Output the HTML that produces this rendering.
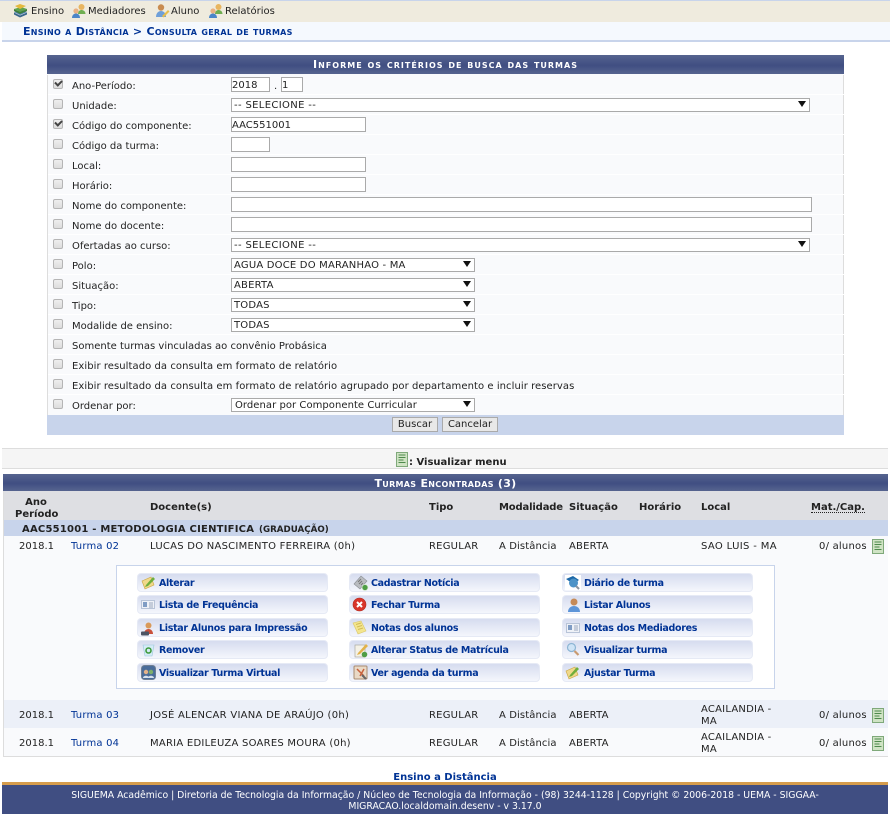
<!DOCTYPE html>
<html lang="pt"><head><meta charset="utf-8"><title>Consulta geral de turmas</title>
<style>
html,body{margin:0;padding:0;background:#fff;width:890px;height:814px;overflow:hidden}
body{position:relative;font:10px/12px "DejaVu Sans",Verdana,sans-serif;color:#222}
.a,.t,.b,.i,.s,.c,svg{position:absolute}
.t{white-space:nowrap;height:12px;line-height:12px;margin-top:1px}
.h{font-weight:bold;color:#222}
.d{letter-spacing:.22px}
.i,.s{box-sizing:border-box;background:#fff;border:1px solid #aaa;height:15px;left:231px;padding:1px 0 0 0;line-height:13px;white-space:nowrap;font-size:10px;color:#222}
.s{height:14px;line-height:12px;padding:1px 1px 0 1px;letter-spacing:.2px}
.s:after{content:"";position:absolute;right:3px;top:2px;border:4px solid transparent;border-top:6px solid #111;border-bottom:0}
.c{left:53px;width:10px;height:10px;box-sizing:border-box;border:1px solid #b5b5b5;border-radius:2px;background:linear-gradient(#eee,#ddd)}
.c.k:after{content:"";position:absolute;left:1px;top:0;width:5px;height:3px;border-left:2px solid #444;border-bottom:2px solid #444;transform:rotate(-45deg)}
.r{position:absolute;left:48px;width:795px;height:19px;background:#f9fafc;border-right:1px solid #ddd}
.b{width:191px;height:19px;box-sizing:border-box;border:1px solid #e6eaf5;border-radius:4px;background:linear-gradient(#d6dcef,#f4f6fc)}
.l{color:#003395;font-weight:bold;font-size:9.5px;letter-spacing:-.3px}
.tu{color:#003395;letter-spacing:.2px}
.btn{position:absolute;box-sizing:border-box;height:15px;background:#e8e8e8;border:1px solid #aaa;text-align:center;line-height:14px;color:#222}
.f{font-size:9.3px;color:#fff;text-align:center;left:2px;width:886px}
</style></head><body>

<div class="a" style="left:0;top:0;width:890px;height:22px;background:#efebde;border-top:1px solid #c8d4eb;box-sizing:border-box"></div>
<svg style="left:13px;top:3px" width="15" height="16" viewBox="0 0 15 16"><path d="M1 9l7-2 6 2-7 3z" fill="#4b7fb5"/><path d="M1 11.500l6 3 7-3v-2l-7 3-6-3z" fill="#38658c"/><path d="M1 6l7-2 6 2-7 3z" fill="#5fa34c"/><path d="M1 8l6 3 7-3v-2l-7 3-6-3z" fill="#3e7f3a"/><path d="M2 3l5-2 6 2-6 3z" fill="#e3b93e"/></svg>
<div class="t" style="left:31px;top:5px">Ensino</div>
<svg style="left:71px;top:3px" width="16" height="16" viewBox="0 0 16 16"><circle cx="10.500" cy="4" r="3" fill="#e8b560"/><path d="M7 11c0-3 2-4 3.500-4s4 1 4 4z" fill="#6fae50"/><circle cx="5" cy="8" r="2.600" fill="#e9b183"/><path d="M1 15c0-3 2-4.500 4-4.500s4 1.500 4 4.500z" fill="#4b86c9"/></svg>
<div class="t" style="left:88px;top:5px">Mediadores</div>
<svg style="left:154px;top:3px" width="16" height="16" viewBox="0 0 16 16"><circle cx="7" cy="4.500" r="3.200" fill="#c98c50"/><path d="M2 14c0-4 2.500-6 5-6s5 2 5 6z" fill="#6f9fd8"/><path d="M8 13l6-6 1.500 1.500-6 6z" fill="#e8bd4a"/></svg>
<div class="t" style="left:171px;top:5px">Aluno</div>
<svg style="left:208px;top:3px" width="16" height="16" viewBox="0 0 16 16"><circle cx="10.500" cy="4" r="3" fill="#e8b560"/><path d="M7 11c0-3 2-4 3.500-4s4 1 4 4z" fill="#6fae50"/><circle cx="5" cy="8" r="2.600" fill="#e9b183"/><path d="M1 15c0-3 2-4.500 4-4.500s4 1.500 4 4.500z" fill="#4b86c9"/></svg>
<div class="t" style="left:225px;top:5px">Relatórios</div>

<div class="a" style="left:2px;top:22px;width:888px;height:20px;box-sizing:border-box;background:#f5f9fe;border-bottom:2px solid #c8d4eb"></div>
<div class="t" style="left:23px;top:25px;font-weight:bold;font-variant:small-caps;color:#003395;font-size:11px;letter-spacing:.27px">Ensino a Distância &gt; Consulta geral de turmas</div>

<div class="a" style="left:47px;top:55px;width:797px;height:19px;background:linear-gradient(#56648f,#404e82 55%,#56648f)"></div>
<div class="t" style="left:47px;top:58px;width:797px;text-align:center;color:#fff;font-weight:bold;font-variant:small-caps;font-size:11px;letter-spacing:1px">Informe os critérios de busca das turmas</div>
<div class="a" style="left:47px;top:74px;width:1px;height:360px;background:#ddd"></div>
<div class="r" style="top:75px"></div><div class="r" style="top:95px"></div><div class="r" style="top:115px"></div><div class="r" style="top:135px"></div><div class="r" style="top:155px"></div><div class="r" style="top:175px"></div><div class="r" style="top:195px"></div><div class="r" style="top:215px"></div><div class="r" style="top:235px"></div><div class="r" style="top:255px"></div><div class="r" style="top:275px"></div><div class="r" style="top:295px"></div><div class="r" style="top:315px"></div><div class="r" style="top:335px"></div><div class="r" style="top:355px"></div><div class="r" style="top:375px"></div><div class="r" style="top:395px;height:20px"></div>
<div class="a" style="left:47px;top:74px;width:797px;height:1px;background:#f9fafc"></div>
<div class="a" style="left:47px;top:415px;width:797px;height:20px;background:#c8d4eb"></div>

<div class="c k" style="top:79px"></div><div class="t" style="left:72px;top:80px">Ano-Período:</div>
<div class="c" style="top:99px"></div><div class="t" style="left:72px;top:100px">Unidade:</div>
<div class="c k" style="top:119px"></div><div class="t" style="left:72px;top:120px">Código do componente:</div>
<div class="c" style="top:139px"></div><div class="t" style="left:72px;top:140px">Código da turma:</div>
<div class="c" style="top:159px"></div><div class="t" style="left:72px;top:160px">Local:</div>
<div class="c" style="top:179px"></div><div class="t" style="left:72px;top:180px">Horário:</div>
<div class="c" style="top:199px"></div><div class="t" style="left:72px;top:200px">Nome do componente:</div>
<div class="c" style="top:219px"></div><div class="t" style="left:72px;top:220px">Nome do docente:</div>
<div class="c" style="top:239px"></div><div class="t" style="left:72px;top:240px">Ofertadas ao curso:</div>
<div class="c" style="top:259px"></div><div class="t" style="left:72px;top:260px">Polo:</div>
<div class="c" style="top:279px"></div><div class="t" style="left:72px;top:280px">Situação:</div>
<div class="c" style="top:299px"></div><div class="t" style="left:72px;top:300px">Tipo:</div>
<div class="c" style="top:319px"></div><div class="t" style="left:72px;top:320px">Modalide de ensino:</div>
<div class="c" style="top:339px"></div><div class="t" style="left:72px;top:340px">Somente turmas vinculadas ao convênio Probásica</div>
<div class="c" style="top:359px"></div><div class="t" style="left:72px;top:360px;letter-spacing:.06px">Exibir resultado da consulta em formato de relatório</div>
<div class="c" style="top:379px"></div><div class="t" style="left:72px;top:380px;letter-spacing:.06px">Exibir resultado da consulta em formato de relatório agrupado por departamento e incluir reservas</div>
<div class="c" style="top:399px"></div><div class="t" style="left:72px;top:400px">Ordenar por:</div>

<div class="i" style="top:77px;width:39px">2018</div>
<div class="t" style="left:274px;top:80px">.</div>
<div class="i" style="top:77px;left:281px;width:22px">1</div>
<div class="s" style="top:98px;width:579px;letter-spacing:.35px;padding-left:2px">-- SELECIONE --</div>
<div class="i" style="top:117px;width:135px">AAC551001</div>
<div class="i" style="top:137px;width:39px"></div>
<div class="i" style="top:157px;width:135px"></div>
<div class="i" style="top:177px;width:135px"></div>
<div class="i" style="top:197px;width:581px"></div>
<div class="i" style="top:217px;width:581px"></div>
<div class="s" style="top:238px;width:579px;letter-spacing:.35px;padding-left:2px">-- SELECIONE --</div>
<div class="s" style="top:258px;width:244px;padding-left:2px">AGUA DOCE DO MARANHAO - MA</div>
<div class="s" style="top:278px;width:244px;padding-left:2px">ABERTA</div>
<div class="s" style="top:298px;width:244px;padding-left:2px">TODAS</div>
<div class="s" style="top:318px;width:244px;padding-left:2px">TODAS</div>
<div class="s" style="top:398px;width:244px;padding-left:3px;letter-spacing:.05px">Ordenar por Componente Curricular</div>

<div class="btn" style="left:392px;top:417px;width:46px">Buscar</div>
<div class="btn" style="left:442px;top:417px;width:56px">Cancelar</div>

<div class="a" style="left:2px;top:448px;width:886px;height:21px;box-sizing:border-box;background:#f5f5f5;border-top:1px solid #ddd;border-bottom:1px solid #ddd"></div>
<svg style="left:396px;top:452px" width="12" height="15" viewBox="0 0 12 15"><rect x=".5" y=".5" width="11" height="14" fill="#cfe3c4" stroke="#7fa97a"/><path d="M2.500 3h7M2.500 5.500h7M2.500 8h5M2.500 10.500h7" stroke="#4e8a4c"/></svg>
<div class="t h" style="left:409px;top:456px">: Visualizar menu</div>

<div class="a" style="left:3px;top:474px;width:885px;height:17px;background:linear-gradient(#56648f,#404e82 55%,#56648f)"></div>
<div class="t" style="left:3px;top:477px;width:885px;text-align:center;color:#fff;font-weight:bold;font-variant:small-caps;font-size:11px;letter-spacing:.3px">Turmas Encontradas (3)</div>
<div class="a" style="left:3px;top:491px;width:885px;height:29px;background:#dedfe3"></div>
<div class="t h" style="left:25px;top:496px;width:22px;text-align:center">Ano</div>
<div class="t h" style="left:15px;top:508px">Período</div>
<div class="t h" style="left:150px;top:501px">Docente(s)</div>
<div class="t h" style="left:429px;top:501px">Tipo</div>
<div class="t h" style="left:499px;top:501px;letter-spacing:-.15px">Modalidade</div>
<div class="t h" style="left:569px;top:501px">Situação</div>
<div class="t h" style="left:639px;top:501px">Horário</div>
<div class="t h" style="left:701px;top:501px">Local</div>
<div class="t h" style="left:811px;top:501px;border-bottom:1px dotted #222;height:10px">Mat./Cap.</div>
<div class="a" style="left:3px;top:520px;width:885px;height:16px;background:#c8d4eb"></div>
<div class="t h" style="left:22px;top:523px;letter-spacing:.22px">AAC551001 - METODOLOGIA CIENTIFICA</div>
<div class="t h" style="left:259px;top:523px;font-size:8.7px">(GRADUAÇÃO)</div>

<div class="a" style="left:3px;top:536px;width:885px;height:220px;background:#f9fafc"></div>
<div class="a" style="left:3px;top:700px;width:885px;height:28px;background:#ecf0f8"></div>
<div class="a" style="left:3px;top:491px;width:1px;height:266px;background:#ddd"></div>
<div class="a" style="left:3px;top:756px;width:885px;height:1px;background:#ddd"></div>

<div class="t" style="left:19px;top:540px">2018.1</div><div class="t tu" style="left:71px;top:540px">Turma 02</div><div class="t d" style="left:150px;top:540px;letter-spacing:.25px">LUCAS DO NASCIMENTO FERREIRA (0h)</div><div class="t d" style="left:429px;top:540px">REGULAR</div><div class="t" style="left:499px;top:540px;letter-spacing:.1px">A Distância</div><div class="t d" style="left:569px;top:540px">ABERTA</div><div class="t" style="left:701px;top:540px;letter-spacing:.35px">SAO LUIS - MA</div><div class="t d" style="left:819px;top:540px">0/ alunos</div>
<svg style="left:872px;top:539px" width="12" height="15" viewBox="0 0 12 15"><rect x=".5" y=".5" width="11" height="14" fill="#cfe3c4" stroke="#7fa97a"/><path d="M2.500 3h7M2.500 5.500h7M2.500 8h5M2.500 10.500h7" stroke="#4e8a4c"/></svg>

<div class="a" style="left:116px;top:565px;width:659px;height:124px;box-sizing:border-box;background:#fff;border:1px solid #c8d4eb"></div>

<div class="b" style="left:137px;top:573px"></div><div class="b" style="left:349px;top:573px"></div><div class="b" style="left:562px;top:573px"></div>
<div class="b" style="left:137px;top:595px"></div><div class="b" style="left:349px;top:595px"></div><div class="b" style="left:562px;top:595px"></div>
<div class="b" style="left:137px;top:618px"></div><div class="b" style="left:349px;top:618px"></div><div class="b" style="left:562px;top:618px"></div>
<div class="b" style="left:137px;top:640px"></div><div class="b" style="left:349px;top:640px"></div><div class="b" style="left:562px;top:640px"></div>
<div class="b" style="left:137px;top:663px"></div><div class="b" style="left:349px;top:663px"></div><div class="b" style="left:562px;top:663px"></div>

<div class="t l" style="left:159px;top:577px">Alterar</div><div class="t l" style="left:371px;top:577px">Cadastrar Notícia</div><div class="t l" style="left:584px;top:577px">Diário de turma</div>
<div class="t l" style="left:159px;top:599px">Lista de Frequência</div><div class="t l" style="left:371px;top:599px">Fechar Turma</div><div class="t l" style="left:584px;top:599px">Listar Alunos</div>
<div class="t l" style="left:159px;top:622px">Listar Alunos para Impressão</div><div class="t l" style="left:371px;top:622px">Notas dos alunos</div><div class="t l" style="left:584px;top:622px">Notas dos Mediadores</div>
<div class="t l" style="left:159px;top:644px">Remover</div><div class="t l" style="left:371px;top:644px">Alterar Status de Matrícula</div><div class="t l" style="left:584px;top:644px">Visualizar turma</div>
<div class="t l" style="left:159px;top:667px">Visualizar Turma Virtual</div><div class="t l" style="left:371px;top:667px">Ver agenda da turma</div><div class="t l" style="left:584px;top:667px">Ajustar Turma</div>

<svg style="left:141px;top:575px" width="15" height="15" viewBox="0 0 15 15"><path d="M1 6l9-4 3 8-9 4z" fill="#f0d98a" stroke="#c9a33f" stroke-width=".6"/><path d="M5 10l7-8 2 2-7 7-3 1z" fill="#6fae3c"/></svg>
<svg style="left:141px;top:599px" width="15" height="11" viewBox="0 0 15 11"><rect x=".5" y="1.500" width="13" height="8" fill="#eef1f7" stroke="#b8c4d8"/><rect x="2" y="3" width="4" height="5" fill="#7f9cc4"/><path d="M8 4h4M8 6h4M8 8h4" stroke="#9aa8be"/></svg>
<svg style="left:140px;top:621px" width="16" height="16" viewBox="0 0 16 16"><circle cx="8.500" cy="4.500" r="3" fill="#d99a5a"/><path d="M4 13c0-3 2-5 4.500-5s4.500 2 4.500 5z" fill="#c9503a"/><rect x="1" y="10.500" width="8" height="4" rx="1" fill="#4d5564"/></svg>
<svg style="left:142px;top:643px" width="13" height="14" viewBox="0 0 13 14"><path d="M1 2h11l-2 11H3z" fill="#d4ecf6" stroke="#9cc6dc" stroke-width=".6"/><circle cx="6.500" cy="7.500" r="2.500" fill="none" stroke="#3f9a3c" stroke-width="1.600"/></svg>
<svg style="left:141px;top:665px" width="15" height="15" viewBox="0 0 15 15"><rect x=".5" y=".5" width="14" height="14" rx="3" fill="#4a6d9a" stroke="#6f7f93"/><circle cx="5" cy="7" r="2.200" fill="#e3b38a"/><circle cx="10" cy="7" r="2.200" fill="#7fb06a"/><path d="M2 13c0-3 6-3 6 0zM7 13c0-3 6-3 6 0z" fill="#d8e2ee"/></svg>

<svg style="left:353px;top:575px" width="16" height="16" viewBox="0 0 16 16"><path d="M1 9l7-8 6 5-7 8z" fill="#b9bcc0" stroke="#8b8f94" stroke-width=".6"/><path d="M5 7l3-3M6 9l3-3M8 10l2-2" stroke="#777"/><circle cx="12" cy="12.500" r="3" fill="#4f9d45" stroke="#d9ecd3" stroke-width=".7"/></svg>
<svg style="left:352px;top:597px" width="15" height="15" viewBox="0 0 15 15"><circle cx="7.500" cy="7.500" r="6.500" fill="#d8352a" stroke="#b02a20" stroke-width=".6"/><path d="M5 5l5 5M10 5l-5 5" stroke="#fff" stroke-width="2"/></svg>
<svg style="left:352px;top:620px" width="15" height="15" viewBox="0 0 15 15"><path d="M1 3l8-2 5 10-8 3z" fill="#f3e58e" stroke="#d9c667" stroke-width=".6"/><path d="M4 4.500l5-1.500M5 7l5-1.500M6 9.500l5-1.500" stroke="#d2bb55"/></svg>
<svg style="left:354px;top:642px" width="15" height="16" viewBox="0 0 15 16"><rect x="1" y="3" width="10" height="12" fill="#f4f1e6" stroke="#a8a8a0" stroke-width=".7"/><path d="M4 11l8-9 2 2-8 8-3 1z" fill="#e2b24a"/><circle cx="10.500" cy="12.500" r="2.800" fill="#4f9d45"/></svg>
<svg style="left:353px;top:665px" width="15" height="16" viewBox="0 0 15 16"><rect x="1" y="1" width="13" height="13" rx="1" fill="#e9d9c6" stroke="#a88a70"/><path d="M4 4l7 7M11 4l-4 7" stroke="#c7613c" stroke-width="1.500"/><path d="M9 10l4 4" stroke="#666" stroke-width="2"/></svg>

<svg style="left:565px;top:575px" width="16" height="15" viewBox="0 0 16 15"><rect width="16" height="15" fill="#fff"/><path d="M1 4l7-3 6 4-3 2-7-1z" fill="#1b67a8"/><circle cx="8.500" cy="8" r="4.500" fill="#4d93c7"/><path d="M11 11l3 3" stroke="#8a94a0" stroke-width="2"/></svg>
<svg style="left:567px;top:597px" width="14" height="16" viewBox="0 0 14 16"><circle cx="7" cy="5" r="3.500" fill="#c58a58"/><path d="M1 15c0-4 3-6 6-6s6 2 6 6z" fill="#5d95d8"/></svg>
<svg style="left:566px;top:623px" width="14" height="11" viewBox="0 0 14 11"><rect x=".5" y=".5" width="13" height="9" fill="#eef1f7" stroke="#b8c4d8"/><rect x="2" y="2" width="4" height="5" fill="#7f9cc4"/><path d="M8 3h4M8 5h4M8 7h4" stroke="#9aa8be"/></svg>
<svg style="left:566px;top:642px" width="14" height="15" viewBox="0 0 14 15"><circle cx="5.500" cy="5.500" r="4" fill="#cfe4f6" stroke="#8cb5d4" stroke-width="1.200"/><path d="M8.500 9l4 4" stroke="#c89a70" stroke-width="2.200"/></svg>
<svg style="left:565px;top:665px" width="15" height="15" viewBox="0 0 15 15"><path d="M1 6l9-4 3 8-9 4z" fill="#f0d98a" stroke="#c9a33f" stroke-width=".6"/><path d="M5 10l7-8 2 2-7 7-3 1z" fill="#6fae3c"/></svg>

<div class="t" style="left:19px;top:709px">2018.1</div><div class="t tu" style="left:71px;top:709px">Turma 03</div><div class="t" style="left:150px;top:709px;letter-spacing:.27px">JOSÉ ALENCAR VIANA DE ARAÚJO (0h)</div><div class="t d" style="left:429px;top:709px">REGULAR</div><div class="t" style="left:499px;top:709px;letter-spacing:.1px">A Distância</div><div class="t d" style="left:569px;top:709px">ABERTA</div><div class="t d" style="left:701px;top:703px">ACAILANDIA -</div><div class="t d" style="left:701px;top:715px">MA</div><div class="t d" style="left:819px;top:709px">0/ alunos</div>
<svg style="left:872px;top:708px" width="12" height="15" viewBox="0 0 12 15"><rect x=".5" y=".5" width="11" height="14" fill="#cfe3c4" stroke="#7fa97a"/><path d="M2.500 3h7M2.500 5.500h7M2.500 8h5M2.500 10.500h7" stroke="#4e8a4c"/></svg>
<div class="t" style="left:19px;top:737px">2018.1</div><div class="t tu" style="left:71px;top:737px">Turma 04</div><div class="t" style="left:150px;top:737px;letter-spacing:.25px">MARIA EDILEUZA SOARES MOURA (0h)</div><div class="t d" style="left:429px;top:737px">REGULAR</div><div class="t" style="left:499px;top:737px;letter-spacing:.1px">A Distância</div><div class="t d" style="left:569px;top:737px">ABERTA</div><div class="t d" style="left:701px;top:731px">ACAILANDIA -</div><div class="t d" style="left:701px;top:743px">MA</div><div class="t d" style="left:819px;top:737px">0/ alunos</div>
<svg style="left:872px;top:736px" width="12" height="15" viewBox="0 0 12 15"><rect x=".5" y=".5" width="11" height="14" fill="#cfe3c4" stroke="#7fa97a"/><path d="M2.500 3h7M2.500 5.500h7M2.500 8h5M2.500 10.500h7" stroke="#4e8a4c"/></svg>

<div class="t" style="left:2px;top:771px;width:886px;text-align:center;font-weight:bold;color:#003395">Ensino a Distância</div>
<div class="a" style="left:2px;top:782px;width:886px;height:32px;box-sizing:border-box;background:#404e82;border-top:3px solid #d59c4c"></div>
<div class="t f" style="top:789px">SIGUEMA Acadêmico | Diretoria de Tecnologia da Informação / Núcleo de Tecnologia da Informação - (98) 3244-1128 | Copyright © 2006-2018 - UEMA - SIGGAA-</div>
<div class="t f" style="top:800px">MIGRACAO.localdomain.desenv - v 3.17.0</div>
</body></html>
